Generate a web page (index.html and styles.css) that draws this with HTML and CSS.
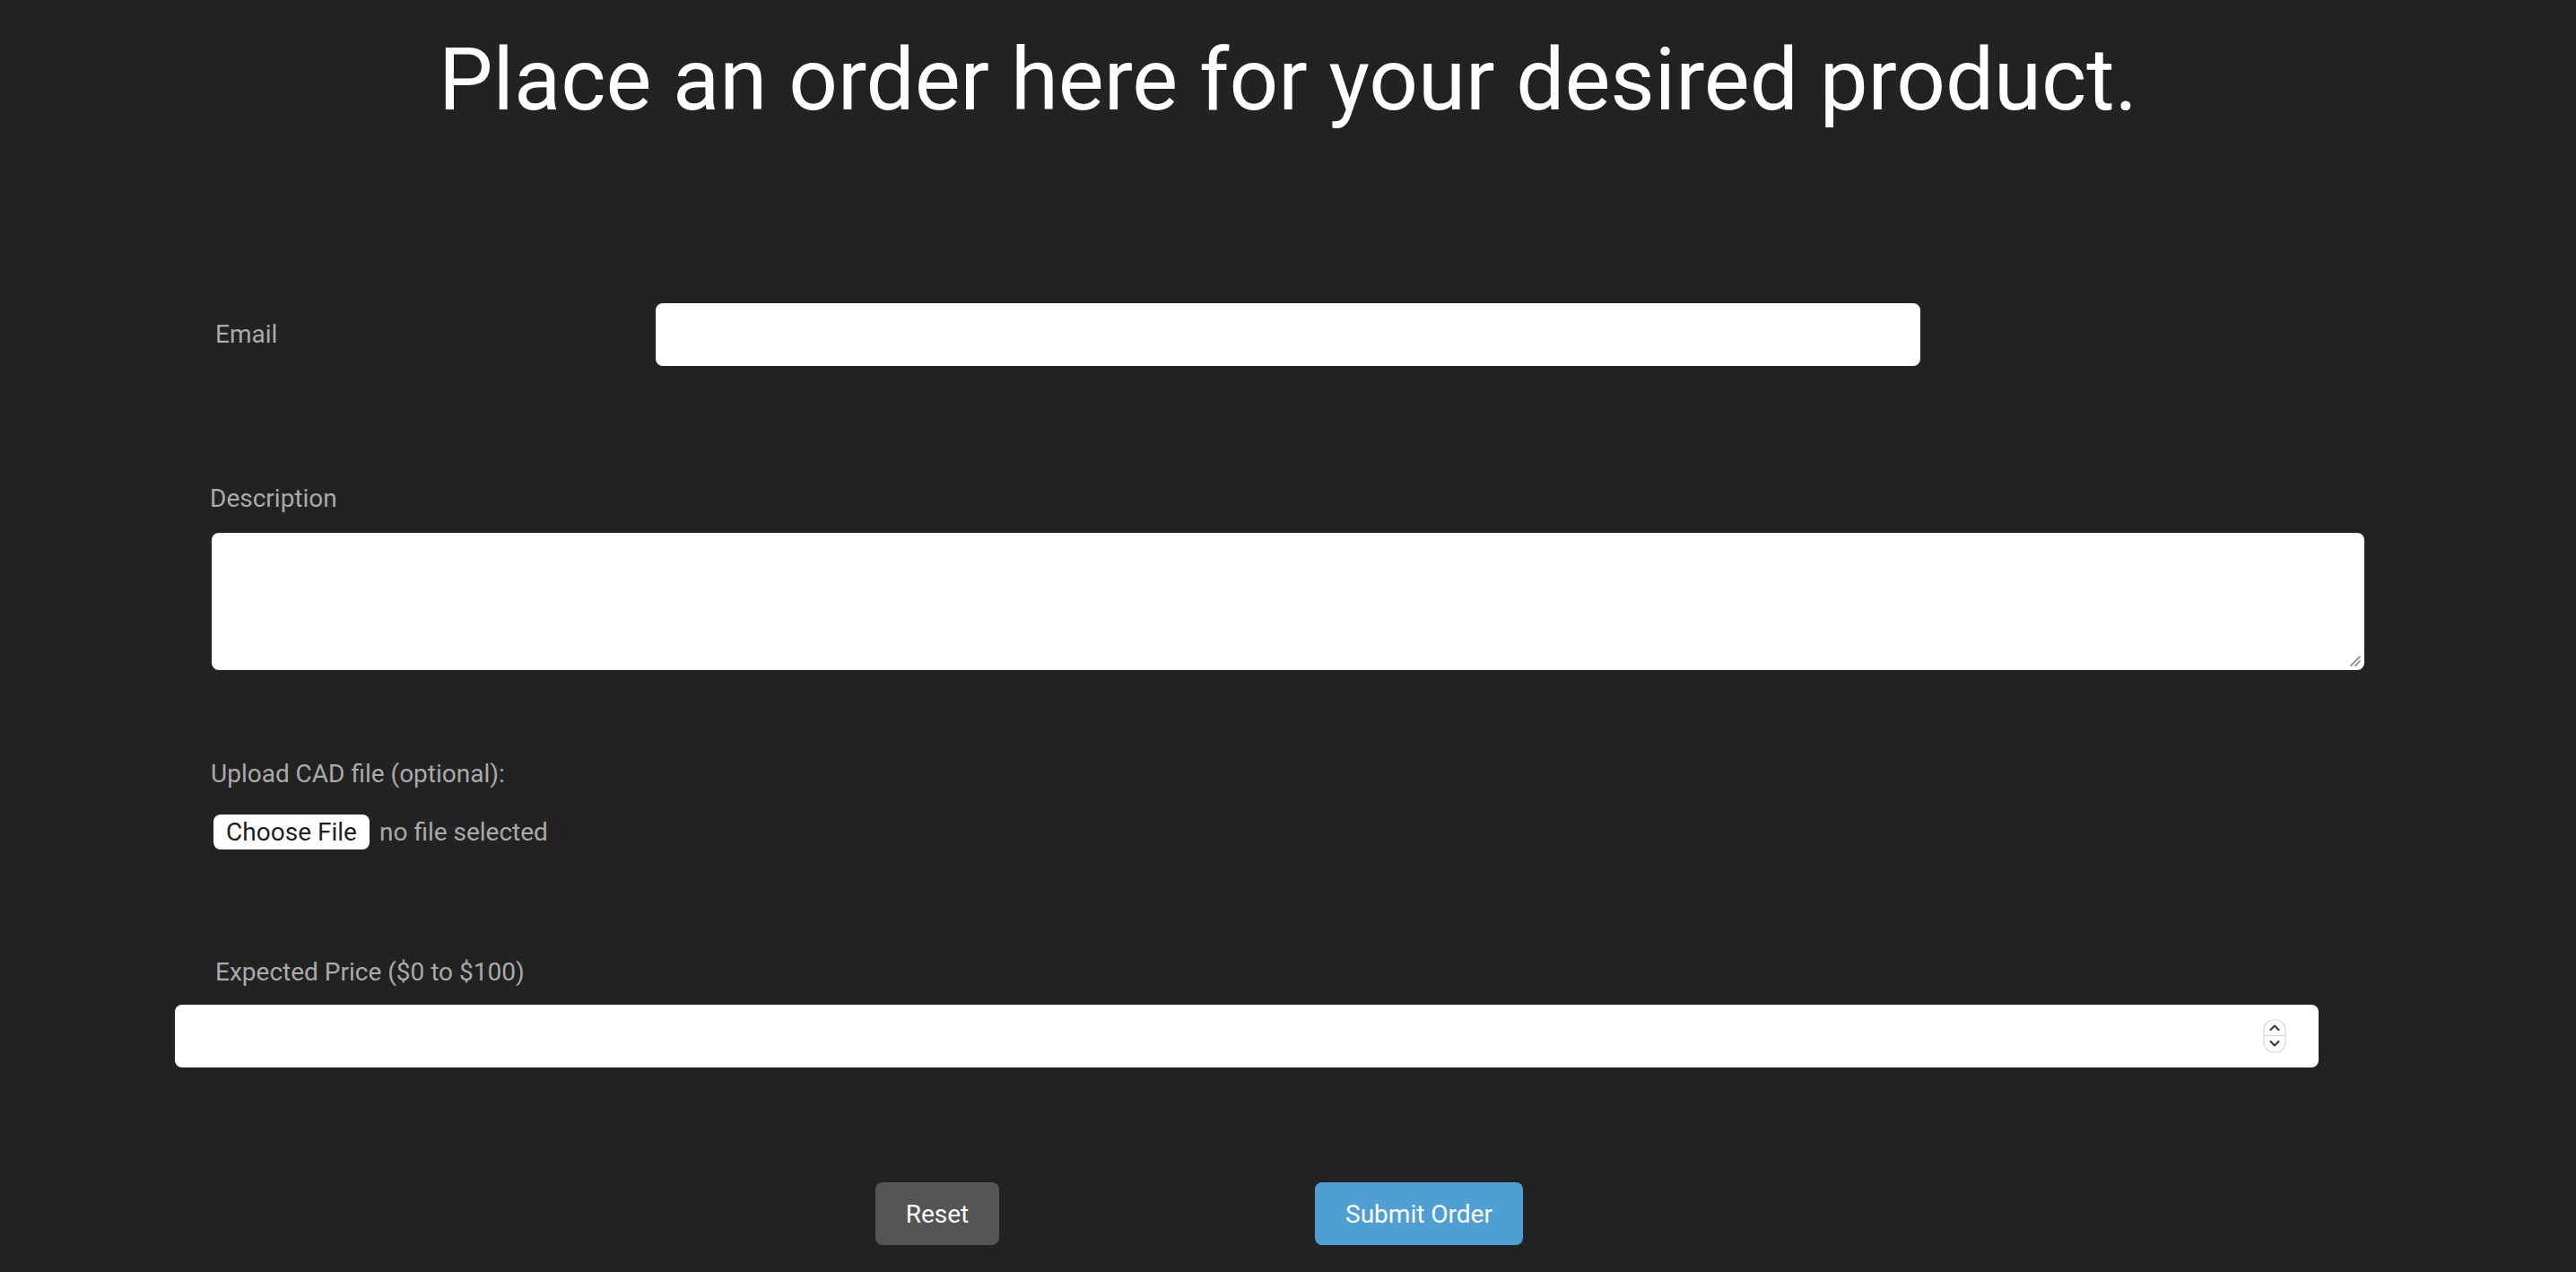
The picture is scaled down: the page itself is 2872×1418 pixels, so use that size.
FILE: index.html
```html
<!DOCTYPE html>
<html lang="en">
<head>
<meta charset="utf-8">
<title>Place an order</title>
<link rel="stylesheet" href="styles.css">
</head>
<body>
<main class="page">
  <h1 class="title">Place an order here for your desired product.</h1>
  <form class="order-form">
    <div class="row-email">
      <label class="label label-email" for="email">Email</label>
      <input class="field field-email" id="email" type="email">
    </div>

    <label class="label label-desc" for="desc">Description</label>
    <div class="desc-wrap">
      <textarea class="field field-desc" id="desc"></textarea>
      <svg class="grip" width="14" height="14" viewBox="0 0 14 14" aria-hidden="true">
        <path d="M2 12 L12 2 M7 12 L12 7" stroke="#7a7a7a" stroke-width="1.6" stroke-linecap="round"/>
      </svg>
    </div>

    <label class="label label-upload">Upload CAD file (optional):</label>
    <div class="file-row">
      <span class="file-btn">Choose File</span>
      <span class="file-name">no file selected</span>
    </div>

    <label class="label label-price" for="price">Expected Price ($0 to $100)</label>
    <div class="price-wrap">
      <input class="field field-price" id="price" type="number" min="0" max="100">
      <svg class="stepper" width="26" height="38" viewBox="0 0 26 38" aria-hidden="true">
        <rect x="1" y="1" width="24" height="36" rx="11" fill="#fff" stroke="#d6d6d6" stroke-width="1.2"/>
        <line x1="1" y1="18.5" x2="25" y2="18.5" stroke="#d6d6d6" stroke-width="1.2"/>
        <path d="M8.5 12 L13 7.5 L17.5 12" fill="none" stroke="#333" stroke-width="2" stroke-linecap="round" stroke-linejoin="round"/>
        <path d="M8.5 25 L13 29.5 L17.5 25" fill="none" stroke="#333" stroke-width="2" stroke-linecap="round" stroke-linejoin="round"/>
      </svg>
    </div>

    <div class="actions">
      <button type="reset" class="btn btn-reset">Reset</button>
      <button type="submit" class="btn btn-submit">Submit Order</button>
    </div>
  </form>
</main>
</body>
</html>
```

FILE: styles.css
```css
html, body {
  margin: 0;
  padding: 0;
  background: #222222;
}

body {
  font-family: Roboto, "Liberation Sans", Arial, sans-serif;
  color: #aaaaaa;
  min-height: 1418px;
}

.page {
  display: flex;
  flex-direction: column;
}

.title {
  margin: 33px 0 0 0;
  font-size: 96px;
  line-height: 112px;
  font-weight: 400;
  color: #ffffff;
  text-align: center;
}

.order-form {
  display: flex;
  flex-direction: column;
  align-items: flex-start;
  margin-top: 193px;
}

.label {
  display: block;
  font-size: 28px;
  line-height: 34px;
  color: #aaaaaa;
}

.field {
  box-sizing: border-box;
  background: #ffffff;
  border: none;
  border-radius: 8px;
  outline: none;
  font-family: inherit;
  font-size: 28px;
  margin: 0;
}

.row-email {
  display: flex;
  align-items: center;
}

.label-email {
  width: 491px;
  padding-left: 240px;
  box-sizing: content-box;
}

.field-email {
  width: 1410px;
  height: 70px;
}

.label-desc {
  margin: 131px 0 0 234px;
}

.desc-wrap {
  position: relative;
  margin: 21px 0 0 236px;
  display: flex;
}

.field-desc {
  width: 2400px;
  height: 153px;
  resize: none;
  display: block;
}

.grip {
  position: absolute;
  right: 3px;
  bottom: 3px;
}

.label-upload {
  margin: 99px 0 0 235px;
}

.file-row {
  display: flex;
  align-items: center;
  margin: 28px 0 0 238px;
  font-size: 28px;
}

.file-btn {
  display: flex;
  align-items: center;
  justify-content: center;
  box-sizing: border-box;
  width: 174px;
  height: 39px;
  background: #ffffff;
  color: #1e1e1e;
  border-radius: 8px;
}

.file-name {
  margin-left: 11px;
  color: #aaaaaa;
}

.label-price {
  margin: 120px 0 0 240px;
}

.price-wrap {
  position: relative;
  margin: 19px 0 0 195px;
  display: flex;
}

.field-price {
  width: 2390px;
  height: 70px;
  -moz-appearance: textfield;
}

.field-price::-webkit-inner-spin-button,
.field-price::-webkit-outer-spin-button {
  -webkit-appearance: none;
  margin: 0;
}

.stepper {
  position: absolute;
  left: 2328px;
  top: 16px;
}

.actions {
  display: flex;
  gap: 352px;
  margin: 128px 0 0 976px;
}

.btn {
  box-sizing: border-box;
  height: 70px;
  border: none;
  border-radius: 8px;
  font-family: inherit;
  font-size: 28px;
  color: #ffffff;
  padding: 0;
  cursor: pointer;
}

.btn-reset {
  width: 138px;
  background: #555555;
}

.btn-submit {
  width: 232px;
  background: #4f9fd4;
}
```
